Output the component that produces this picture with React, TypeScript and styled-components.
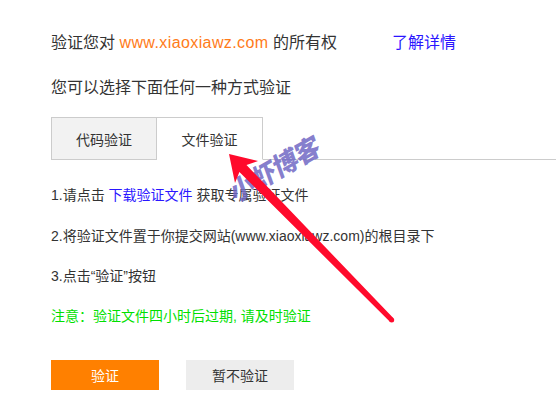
import React from 'react'
import styled, { createGlobalStyle } from 'styled-components';

const GlobalStyle = createGlobalStyle`
  html, body {
    margin: 0;
    padding: 0;
    background: #ffffff;
  }
  body {
    font-family: "Liberation Sans", "Noto Sans CJK SC", sans-serif;
    color: #333333;
  }
`;

const Page = styled.div`
  position: relative;
  width: 556px;
  height: 412px;
  overflow: hidden;
  padding: 31px 0 0 51px;
  box-sizing: border-box;
`;

const Line = styled.div<{ $size?: number; $mb?: number }>`
  font-size: ${(p) => p.$size ?? 14}px;
  line-height: 24px;
  margin-bottom: ${(p) => p.$mb ?? 0}px;
  white-space: nowrap;
`;

const Site = styled.span`
  color: #ff7b19;
  letter-spacing: 0.4px;
`;

const Link = styled.a<{ $gap?: number }>`
  color: #2a16ff;
  text-decoration: none;
  margin-left: ${(p) => p.$gap ?? 0}px;
`;

const TabBar = styled.div`
  display: flex;
  border-bottom: 1px solid #cccccc;
  margin-bottom: 23px;
`;

const Tab = styled.div<{ $active?: boolean }>`
  width: 106px;
  height: 43px;
  box-sizing: border-box;
  display: flex;
  align-items: center;
  justify-content: center;
  font-size: 14px;
  color: #333333;
  border: 1px solid #cccccc;
  border-left: ${(p) => (p.$active ? 'none' : '1px solid #cccccc')};
  border-bottom: ${(p) => (p.$active ? '1px solid #ffffff' : '1px solid #cccccc')};
  background: ${(p) => (p.$active ? '#ffffff' : '#f2f2f2')};
  margin-bottom: -1px;
`;

const Note = styled(Line)`
  color: #00e000;
`;

const Buttons = styled.div`
  display: flex;
  gap: 27px;
  margin-top: 32px;
`;

const Button = styled.button<{ $primary?: boolean }>`
  width: 108px;
  height: 30px;
  border: none;
  padding: 0;
  font-family: inherit;
  font-size: 14px;
  background: ${(p) => (p.$primary ? '#ff8000' : '#ededed')};
  color: ${(p) => (p.$primary ? '#ffffff' : '#333333')};
`;

const Overlay = styled.svg`
  position: absolute;
  left: 0;
  top: 0;
  pointer-events: none;
`;

const Watermark = styled.div`
  position: absolute;
  left: 222px;
  top: 151px;
  width: 104px;
  text-align: center;
  line-height: 34px;
  font-family: "Noto Sans CJK SC", sans-serif;
  font-size: 26px;
  font-weight: 900;
  letter-spacing: -1px;
  color: rgba(112, 104, 196, 0.85);
  transform: rotate(-30deg) skewX(-10deg);
  transform-origin: center center;
  white-space: nowrap;
  pointer-events: none;
`;

function App() {
  return (
    <>
      <GlobalStyle />
      <Page>
        <Line $size={16} $mb={21}>
          验证您对 <Site>www.xiaoxiawz.com</Site> 的所有权<Link $gap={55}>了解详情</Link>
        </Line>
        <Line $size={16} $mb={17}>您可以选择下面任何一种方式验证</Line>
        <TabBar>
          <Tab>代码验证</Tab>
          <Tab $active>文件验证</Tab>
        </TabBar>
        <Line $mb={17}>1.请点击 <Link>下载验证文件</Link> 获取专属验证文件</Line>
        <Line $mb={16}>2.将验证文件置于你提交网站(www.xiaoxiawz.com)的根目录下</Line>
        <Line $mb={16}>3.点击“验证”按钮</Line>
        <Note>注意：验证文件四小时后过期, 请及时验证</Note>
        <Buttons>
          <Button $primary>验证</Button>
          <Button>暂不验证</Button>
        </Buttons>
        <Watermark>小虾博客</Watermark>
        <Overlay width="556" height="412" viewBox="0 0 556 412">
          <polygon
            points="229,154 258,161 246.5,165 393.5,318.3 389.9,321.7 239.4,172 235,183"
            fill="#ff0a2c"
          />
          <circle cx="391.7" cy="320" r="2.5" fill="#ff0a2c" />
        </Overlay>
      </Page>
    </>
  )
}

export default App
